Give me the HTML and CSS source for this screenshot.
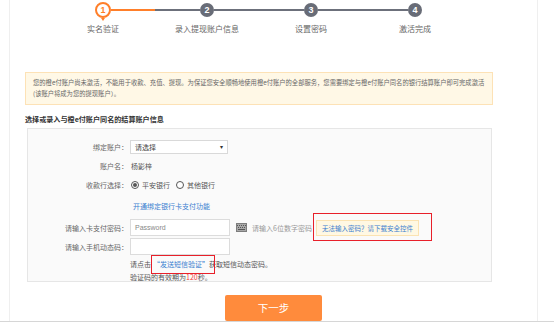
FILE: index.html
```html
<!DOCTYPE html>
<html lang="zh-CN">
<head>
<meta charset="utf-8">
<link rel="stylesheet" href="styles.css">
</head>
<body>
<div class="page">
  <div class="panel">
    <div class="steps">
      <div class="step first active">
        <div class="track"><span class="seg seg-l"></span><span class="dot">1</span><span class="seg seg-r"></span></div>
        <div class="step-label">实名验证</div>
      </div>
      <div class="step">
        <div class="track"><span class="seg seg-l"></span><span class="dot">2</span><span class="seg seg-r"></span></div>
        <div class="step-label">录入提现账户信息</div>
      </div>
      <div class="step">
        <div class="track"><span class="seg seg-l"></span><span class="dot">3</span><span class="seg seg-r"></span></div>
        <div class="step-label">设置密码</div>
      </div>
      <div class="step last">
        <div class="track"><span class="seg seg-l"></span><span class="dot">4</span><span class="seg seg-r"></span></div>
        <div class="step-label">激活完成</div>
      </div>
    </div>

    <div class="content">
      <div class="notice">您的橙e付账户尚未激活，不能用于收款、充值、提现。为保证您安全顺畅地使用橙e付账户的全部服务，您需要绑定与橙e付账户同名的银行结算账户即可完成激活<br>(该账户将成为您的提现账户）。</div>
      <div class="heading">选择或录入与橙e付账户同名的结算账户信息</div>

      <div class="formbox">
        <div class="row r1">
          <div class="label">绑定账户：</div>
          <div class="select"><span>请选择</span><span class="arrow">▾</span></div>
        </div>
        <div class="row r2">
          <div class="label">账户名：</div>
          <div class="value">杨影梓</div>
        </div>
        <div class="row r3">
          <div class="label">收款行选择：</div>
          <div class="radios">
            <span class="radio on"></span><span class="rtext">平安银行</span>
            <span class="radio"></span><span class="rtext">其他银行</span>
          </div>
        </div>
        <div class="row r4">
          <div class="label"></div>
          <a class="link">开通绑定银行卡支付功能</a>
        </div>
        <div class="row r5">
          <div class="label">请输入卡支付密码：</div>
          <div class="input"><span class="ph">Password</span></div>
          <svg class="kbd" width="11" height="9" viewBox="0 0 11 9">
            <rect x="0" y="0" width="11" height="9" fill="#7d7d7d"/>
            <rect x="1" y="1" width="9" height="7" fill="#a8a8a8"/>
            <g fill="#555">
              <rect x="1" y="2" width="1" height="1"/><rect x="3" y="2" width="1" height="1"/><rect x="5" y="2" width="1" height="1"/><rect x="7" y="2" width="1" height="1"/><rect x="9" y="2" width="1" height="1"/>
              <rect x="2" y="4" width="1" height="1"/><rect x="4" y="4" width="1" height="1"/><rect x="6" y="4" width="1" height="1"/><rect x="8" y="4" width="1" height="1"/>
              <rect x="2" y="6" width="7" height="1"/>
            </g>
          </svg>
          <span class="hint">请输入6位数字密码</span>
          <span class="tipwrap"><span class="tip">无法输入密码？请下载安全控件</span></span>
        </div>
        <div class="row r6">
          <div class="label">请输入手机动态码：</div>
          <div class="input"></div>
        </div>
        <div class="row r7 indent">请点击<span class="sms">“发送短信验证”</span>获取短信动态密码。</div>
        <div class="row r8 indent">验证码的有效期为<span class="red">120</span>秒。</div>
      </div>

      <div class="btnrow"><button class="next">下一步</button></div>
    </div>
  </div>
</div>
</body>
</html>
```

FILE: styles.css
```css
* { box-sizing: border-box; }
html, body { margin: 0; padding: 0; background: #fff; }
body {
  font-family: "Noto Sans CJK SC", "Noto Sans", sans-serif;
  color: #666;
  width: 554px;
  height: 323px;
  overflow: hidden;
}
.page {
  height: 322px;
  border-bottom: 1px solid #d6d6d6;
}
.panel {
  margin-left: 9px;
  width: 529px;
  height: 321px;
  border-left: 1px solid #efefef;
  border-right: 1px solid #efefef;
}

/* steps */
.steps {
  display: grid;
  grid-template-columns: repeat(4, 104px);
  margin-left: 41px;
  padding-top: 2px;
}
.step { display: flex; flex-direction: column; align-items: center; }
.track { display: flex; align-items: center; width: 100%; height: 16px; }
.seg { flex: 1; height: 2px; background: #6c707b; }
.first .seg-l, .last .seg-r { background: transparent; }
.first .seg-r { background: #ff7f2a; }
.dot {
  width: 14px; height: 14px; border-radius: 50%;
  background: #686c77; color: #fff;
  font-family: "Liberation Sans", sans-serif;
  font-size: 9px; font-weight: bold; line-height: 14px; text-align: center;
}
.active .dot {
  position: relative;
  width: 16px; height: 16px;
  background: #fff; border: 2px solid #ff7f2a; color: #ff7f2a;
  line-height: 12px;
}
.active .dot::after {
  content: "";
  position: absolute;
  left: 4px; bottom: -5px;
  border-left: 2px solid transparent;
  border-right: 2px solid transparent;
  border-top: 3px solid #ff7f2a;
}
.step-label {
  margin-top: 6px;
  font-size: 8px;
  line-height: 10px;
  color: #666;
}

/* content */
.content { margin-left: 15px; width: 468px; }
.notice {
  margin-top: 38px;
  height: 33px;
  background: #fff8e6;
  border: 1px solid #fde2b6;
  padding: 4px 0 0 7px;
  font-size: 6.3px;
  line-height: 11px;
  color: #666;
  white-space: nowrap;
}
.heading {
  margin-top: 9px;
  font-size: 7.1px;
  line-height: 10px;
  font-weight: bold;
  color: #333;
}
.formbox {
  margin: 4px 0 0 2px;
  width: 465px;
  height: 154px;
  background: #fafafa;
  border: 1px solid #e6e6e6;
  padding-top: 8px;
  font-size: 7px;
}
.row { display: flex; align-items: center; height: 19px; line-height: 10px; }
.label { width: 100px; text-align: right; color: #666; margin-right: 2px; flex: none; }
.r4 { height: 24px; }
.r7 { height: 16px; }
.r8 { height: 9px; }
.indent { padding-left: 102px; color: #555; }

.select {
  width: 98px; height: 14px;
  background: #fff; border: 1px solid #d9d9d9;
  display: flex; justify-content: space-between; align-items: center;
  padding: 0 4px;
  color: #444;
}
.arrow { font-size: 6px; color: #333; }
.value { color: #555; padding-left: 1px; }
.radios { display: flex; align-items: center; padding-left: 1px; }
.radio {
  width: 8px; height: 8px; border-radius: 50%;
  border: 1px solid #555; background: #fff;
  display: flex; align-items: center; justify-content: center;
  margin-right: 3px;
}
.radio.on::before { content: ""; width: 4px; height: 4px; border-radius: 50%; background: #555; }
.rtext { margin-right: 6px; color: #555; }
.link { color: #3b7fd0; padding-left: 3px; }
.input {
  width: 100px; height: 17px;
  background: #fff; border: 1px solid #dcdcdc;
  padding-left: 4px;
  display: flex; align-items: center;
}
.ph { font-family: "Liberation Sans", sans-serif; font-size: 7px; color: #888; }
.kbd { margin-left: 6px; flex: none; }
.hint { margin-left: 5px; color: #999; }
.tipwrap { position: relative; margin-left: 4px; }
.tipwrap::after {
  content: "";
  position: absolute;
  top: -7px; bottom: -5px; left: -3px; right: -13px;
  border: 1px solid #e8202a;
}
.tip {
  display: block;
  background: #fff8e3;
  border: 1px solid #fbe3b2;
  color: #3b7fd0;
  font-size: 6.5px;
  padding: 2px 5px;
  line-height: 10px;
}
.sms { position: relative; color: #3b7fd0; margin-left: 2px; }
.sms::after {
  content: "";
  position: absolute;
  top: -4px; bottom: -5px; left: -2px; right: -6px;
  border: 1px solid #e8202a;
}
.red { color: #f23b3b; }

.btnrow { margin-top: 11px; padding-left: 200px; }
.next {
  width: 97px; height: 26px;
  background: #ff8b3c;
  border: none; border-radius: 2px;
  color: #fff;
  font-family: "Noto Sans CJK SC", sans-serif;
  font-size: 10.5px;
  padding: 0;
}
```
